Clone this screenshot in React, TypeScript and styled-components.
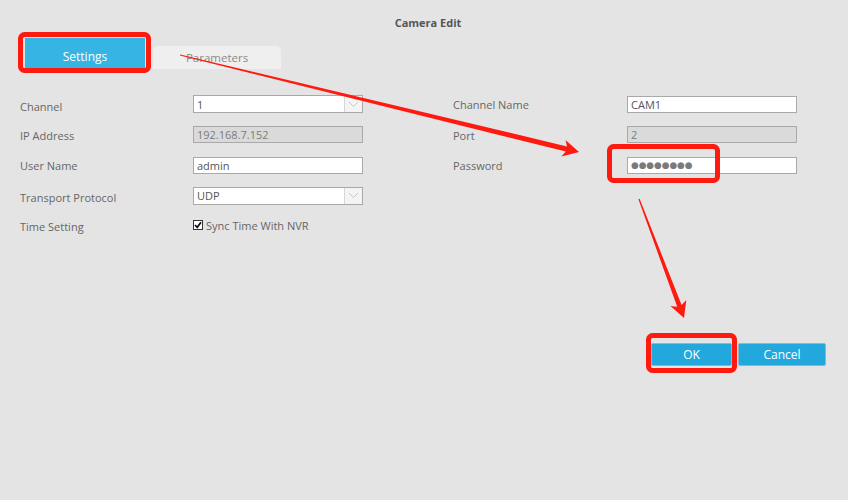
import React from "react";
import styled, { createGlobalStyle } from "styled-components";

const GlobalStyle = createGlobalStyle`
  html, body { margin: 0; padding: 0; }
  body {
    background: #e4e4e4;
    font-family: "Open Sans", "Liberation Sans", Arial, sans-serif;
  }
`;

const Page = styled.div`
  position: relative;
  width: 848px;
  height: 500px;
  overflow: hidden;
  display: flex;
  flex-direction: column;
  background: #e4e4e4;
`;

const Title = styled.div`
  margin-top: 16px;
  height: 14px;
  line-height: 14px;
  text-align: center;
  font-size: 11px;
  font-weight: 700;
  color: #555;
  padding-left: 8px;
`;

const Tabs = styled.div`
  margin-top: 8px;
  margin-left: 25px;
  display: flex;
  align-items: flex-end;
  gap: 8px;
  height: 31px;
`;

const Tab = styled.div<{ $active?: boolean }>`
  display: flex;
  align-items: center;
  justify-content: center;
  font-size: ${(p) => (p.$active ? "12px" : "11.5px")};
  width: ${(p) => (p.$active ? "120px" : "128px")};
  height: ${(p) => (p.$active ? "31px" : "23px")};
  background: ${(p) => (p.$active ? "#36b4e4" : "#efefef")};
  color: ${(p) => (p.$active ? "#ffffff" : "#8a8a8a")};
  border-radius: ${(p) => (p.$active ? "0" : "5px 5px 0 0")};
  padding-top: ${(p) => (p.$active ? "6px" : "0")};
  box-sizing: border-box;
`;

const Form = styled.div`
  margin-top: 20px;
  margin-left: 20px;
  display: grid;
  grid-template-columns: 173px 170px 90px 174px 170px;
  grid-auto-rows: 30.5px;
  align-items: center;
`;

const Label = styled.div<{ $col: number; $shift?: number }>`
  grid-column: ${(p) => p.$col};
  font-size: 11px;
  color: #666;
  position: relative;
  top: ${(p) => p.$shift ?? 0}px;
`;

const Input = styled.input<{ $col: number; $gray?: boolean; $dots?: boolean }>`
  grid-column: ${(p) => p.$col};
  box-sizing: border-box;
  width: 170px;
  height: 17px;
  margin: 0;
  padding: 0 3px;
  border: 1px solid #a9a9a9;
  background: ${(p) => (p.$gray ? "#dadada" : "#ffffff")};
  color: ${(p) => (p.$gray || p.$dots ? "#7a7a7a" : "#555")};
  font-family: ${(p) =>
    p.$dots
      ? `"DejaVu Sans", sans-serif`
      : `"Open Sans", "Liberation Sans", Arial, sans-serif`};
  font-size: ${(p) => (p.$dots ? "8.8px" : "11px")};
  letter-spacing: 0;
  outline: none;
`;

const Select = styled.div<{ $col: number }>`
  grid-column: ${(p) => p.$col};
  box-sizing: border-box;
  width: 170px;
  height: 18px;
  border: 1px solid #a9a9a9;
  background: #fff;
  display: flex;
  align-items: center;
  font-size: 11px;
  color: #555;
`;

const SelectValue = styled.span`
  flex: 1;
  padding-left: 3px;
`;

const SelectArrow = styled.span`
  width: 17px;
  height: 100%;
  border-left: 1px solid #d6d6d6;
  background: #f4f4f4;
  display: flex;
  align-items: center;
  justify-content: center;
`;

const CheckRow = styled.label<{ $col: number }>`
  grid-column: ${(p) => p.$col} / span 2;
  display: flex;
  align-items: center;
  gap: 3px;
  font-size: 11px;
  color: #666;
  position: relative;
  top: -1px;
`;

const CheckBox = styled.span`
  box-sizing: border-box;
  width: 10px;
  height: 10px;
  border: 1px solid #333;
  background: #fff;
  display: flex;
  align-items: center;
  justify-content: center;
`;

const Buttons = styled.div`
  margin-top: 101px;
  display: flex;
  justify-content: flex-end;
  gap: 6px;
  padding-right: 22px;
`;

const Button = styled.button<{ $w: number }>`
  width: ${(p) => p.$w}px;
  height: 23px;
  margin: 0;
  border: 1px solid #8fb6c8;
  border-radius: 2px;
  background: #23a8de;
  color: #fff;
  font-family: "Open Sans", "Liberation Sans", Arial, sans-serif;
  font-size: 12px;
  padding: 0;
`;

const Overlay = styled.svg`
  position: absolute;
  left: 0;
  top: 0;
  width: 848px;
  height: 500px;
  pointer-events: none;
`;

function arrowPoints(
  x1: number,
  y1: number,
  x2: number,
  y2: number,
  headLen: number,
  headHalf: number,
  shaftHalf: number,
  startHalf: number
) {
  const dx = x2 - x1;
  const dy = y2 - y1;
  const len = Math.hypot(dx, dy);
  const ux = dx / len;
  const uy = dy / len;
  const px = -uy;
  const py = ux;
  const bx = x2 - ux * headLen;
  const by = y2 - uy * headLen;
  const nx = x2 - ux * (headLen - 3);
  const ny = y2 - uy * (headLen - 3);
  const pts: [number, number][] = [
    [x1 + px * startHalf, y1 + py * startHalf],
    [nx + px * shaftHalf, ny + py * shaftHalf],
    [bx + px * headHalf, by + py * headHalf],
    [x2, y2],
    [bx - px * headHalf, by - py * headHalf],
    [nx - px * shaftHalf, ny - py * shaftHalf],
    [x1 - px * startHalf, y1 - py * startHalf],
  ];
  return pts.map((p) => p.map((v) => v.toFixed(1)).join(",")).join(" ");
}

const Chevron = () => (
  <svg width="11" height="7" viewBox="0 0 11 7">
    <path d="M1 1 L5.5 5.5 L10 1" fill="none" stroke="#c4c4c4" strokeWidth="1" />
  </svg>
);

export default function App() {
  return (
    <>
      <GlobalStyle />
      <Page>
        <Title>Camera Edit</Title>
        <Tabs>
          <Tab $active>Settings</Tab>
          <Tab>Parameters</Tab>
        </Tabs>
        <Form>
          <Label $col={1} $shift={2}>Channel</Label>
          <Select $col={2}>
            <SelectValue>1</SelectValue>
            <SelectArrow>
              <Chevron />
            </SelectArrow>
          </Select>
          <Label $col={4}>Channel Name</Label>
          <Input $col={5} readOnly value="CAM1" />

          <Label $col={1} $shift={1}>IP Address</Label>
          <Input $col={2} $gray readOnly value="192.168.7.152" />
          <Label $col={4} $shift={1}>Port</Label>
          <Input $col={5} $gray readOnly value="2" />

          <Label $col={1}>User Name</Label>
          <Input $col={2} readOnly value="admin" />
          <Label $col={4}>Password</Label>
          <Input $col={5} $dots readOnly value="●●●●●●●●" />

          <Label $col={1} $shift={2}>Transport Protocol</Label>
          <Select $col={2}>
            <SelectValue>UDP</SelectValue>
            <SelectArrow>
              <Chevron />
            </SelectArrow>
          </Select>
          <span />
          <span />
          <span />

          <Label $col={1}>Time Setting</Label>
          <CheckRow $col={2}>
            <CheckBox>
              <svg width="8" height="8" viewBox="0 0 8 8">
                <path d="M1 4 L3.2 6.3 L7 1.3" fill="none" stroke="#111" strokeWidth="1.8" />
              </svg>
            </CheckBox>
            Sync Time With NVR
          </CheckRow>
        </Form>
        <Buttons>
          <Button $w={81}>OK</Button>
          <Button $w={88}>Cancel</Button>
        </Buttons>
        <Overlay viewBox="0 0 848 500">
          <g fill="none" stroke="#ff1a10" strokeWidth="5" strokeLinejoin="round">
            <rect x="20.5" y="34.5" width="128" height="36" rx="4" />
            <rect x="609.5" y="146.5" width="108" height="34" rx="4" />
            <rect x="648.5" y="335.5" width="86" height="35" rx="4" />
          </g>
          <g fill="#ff1a10">
            <polygon points={arrowPoints(180, 55, 579, 152, 16, 8.5, 2.6, 0.6)} />
            <polygon points={arrowPoints(639, 199, 684, 318, 16, 8.5, 2.4, 0.6)} />
          </g>
        </Overlay>
      </Page>
    </>
  );
}
